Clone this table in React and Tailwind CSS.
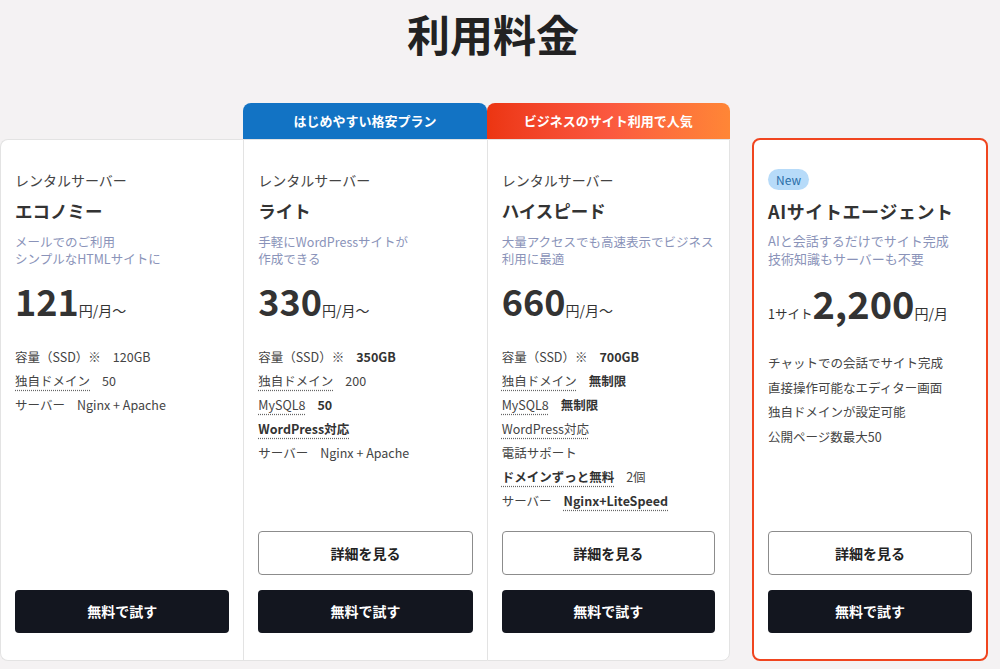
import React from 'react';

const plans = [
  {
    key: 'economy',
    badge: null,
    category: 'レンタルサーバー',
    name: 'エコノミー',
    desc: ['メールでのご利用', 'シンプルなHTMLサイトに'],
    price: '121',
    unit: '円/月〜',
    specs: [
      { label: '容量（SSD）※', value: '120GB' },
      { label: '独自ドメイン', dotted: true, value: '50' },
      { label: 'サーバー', value: 'Nginx + Apache' },
    ],
    detail: false,
  },
  {
    key: 'light',
    badge: { text: 'はじめやすい格安プラン', className: 'bg-[#1273c4]' },
    category: 'レンタルサーバー',
    name: 'ライト',
    desc: ['手軽にWordPressサイトが', '作成できる'],
    price: '330',
    unit: '円/月〜',
    specs: [
      { label: '容量（SSD）※', value: '350GB', bold: true },
      { label: '独自ドメイン', dotted: true, value: '200' },
      { label: 'MySQL8', dotted: true, value: '50', bold: true },
      { label: 'WordPress対応', dotted: true, labelBold: true },
      { label: 'サーバー', value: 'Nginx + Apache' },
    ],
    detail: true,
  },
  {
    key: 'highspeed',
    badge: {
      text: 'ビジネスのサイト利用で人気',
      className: 'bg-linear-to-r from-[#ec3511] via-[#fb583f] to-[#ff8636]',
    },
    category: 'レンタルサーバー',
    name: 'ハイスピード',
    desc: ['大量アクセスでも高速表示でビジネス', '利用に最適'],
    price: '660',
    unit: '円/月〜',
    specs: [
      { label: '容量（SSD）※', value: '700GB', bold: true },
      { label: '独自ドメイン', dotted: true, value: '無制限', bold: true },
      { label: 'MySQL8', dotted: true, value: '無制限', bold: true },
      { label: 'WordPress対応', dotted: true },
      { label: '電話サポート' },
      { label: 'ドメインずっと無料', dotted: true, labelBold: true, value: '2個' },
      { label: 'サーバー', value: 'Nginx+LiteSpeed', bold: true, valueDotted: true },
    ],
    detail: true,
  },
];

const dotted = 'underline decoration-dotted decoration-[#666] underline-offset-[4px]';

const Buttons = ({ detail }) => (
  <div className="mt-auto flex flex-col gap-[15px]">
    {detail && (
      <button className="h-[44px] w-full rounded-[4px] border border-[#8c8c8c] bg-white text-[14px] font-bold text-[#222]">
        詳細を見る
      </button>
    )}
    <button className="h-[43px] w-full rounded-[4px] bg-[#13161f] text-[14px] font-bold text-white">
      無料で試す
    </button>
  </div>
);

const PlanColumn = ({ plan, index }) => {
  const isFirst = index === 0;
  const isLast = index === plans.length - 1;
  return (
    <div className="flex min-w-0 flex-1 flex-col">
      {plan.badge ? (
        <div
          className={`flex h-[36px] shrink-0 items-center justify-center rounded-t-lg text-[13px] font-bold text-white ${plan.badge.className}`}
        >
          {plan.badge.text}
        </div>
      ) : (
        <div className="h-[36px] shrink-0" />
      )}
      <div
        className={`flex flex-1 flex-col border-y border-[#e3e3e3] bg-white px-[14px] pb-[27px] pt-[30px] ${
          isFirst ? 'rounded-l-lg border-l' : 'border-l'
        } ${isLast ? 'rounded-br-lg border-r' : ''}`}
      >
        <div className="text-[14px] leading-[20px] text-[#444]">{plan.category}</div>
        <div className="mt-[8px] text-[17.5px] font-bold leading-[26px] text-[#333]">{plan.name}</div>
        <div className="mt-[9px] whitespace-nowrap text-[12.5px] leading-[17px] text-[#8a93b9]">
          {plan.desc.map((d) => (
            <div key={d}>{d}</div>
          ))}
        </div>
        <div className="mt-[9px] flex items-baseline text-[#333]">
          <span className="text-[36px] font-bold leading-[48px]">{plan.price}</span>
          <span className="text-[14px]">{plan.unit}</span>
        </div>
        <div className="mt-[21px] flex flex-col whitespace-nowrap text-[12.5px] leading-[24px] text-[#444]">
          {plan.specs.map((s) => (
            <div key={s.label} className="flex gap-[12px]">
              <span className={`${s.dotted ? dotted : ''} ${s.labelBold ? 'font-bold text-[#333]' : ''}`}>
                {s.label}
              </span>
              {s.value && (
                <span
                  className={`${s.bold ? 'font-bold text-[#333]' : ''} ${s.valueDotted ? dotted : ''}`}
                >
                  {s.value}
                </span>
              )}
            </div>
          ))}
        </div>
        <div className="mt-auto pt-[12px]">
          <Buttons detail={plan.detail} />
        </div>
      </div>
    </div>
  );
};

const AgentCard = () => (
  <div className="mt-[35px] flex w-[236px] flex-col rounded-lg border-2 border-[#f0451f] bg-white px-[14px] pb-[26px] pt-[29px]">
    <div className="flex">
      <span className="rounded-full bg-[#b7dbf9] px-[8px] text-[12px] leading-[21px] text-[#2a6ea8]">New</span>
    </div>
    <div className="mt-[8px] text-[18px] font-bold leading-[26px] tracking-[0.6px] text-[#333]">
      AIサイトエージェント
    </div>
    <div className="mt-[8px] text-[13px] leading-[18px] text-[#8a93b9]">
      <div>AIと会話するだけでサイト完成</div>
      <div>技術知識もサーバーも不要</div>
    </div>
    <div className="mt-[11px] flex items-baseline text-[#333]">
      <span className="text-[12.5px]">1サイト</span>
      <span className="text-[38px] font-bold leading-[48px]">2,200</span>
      <span className="text-[14px]">円/月</span>
    </div>
    <div className="mt-[24px] flex flex-col text-[12.5px] leading-[24.6px] text-[#444]">
      <div>チャットでの会話でサイト完成</div>
      <div>直接操作可能なエディター画面</div>
      <div>独自ドメインが設定可能</div>
      <div>公開ページ数最大50</div>
    </div>
    <div className="mt-auto pt-[12px]">
      <Buttons detail />
    </div>
  </div>
);

export default function App() {
  return (
    <div className="min-h-screen bg-[#f4f2f3] font-['Noto_Sans_CJK_JP','Noto_Sans',sans-serif]">
      <h1 className="h-[103px] pr-[14px] pt-[5px] text-center text-[43px] font-bold leading-[56px] text-[#222]">
        利用料金
      </h1>
      <div className="flex h-[558px] items-stretch gap-[22px]">
        <div className="flex w-[730px]">
          {plans.map((p, i) => (
            <PlanColumn key={p.key} plan={p} index={i} />
          ))}
        </div>
        <AgentCard />
      </div>
    </div>
  );
}
